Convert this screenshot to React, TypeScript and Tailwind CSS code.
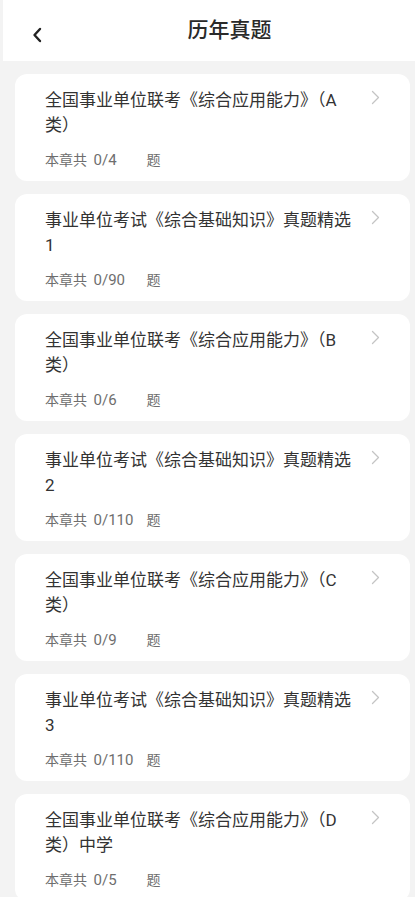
const items = [
  { title: '全国事业单位联考《综合应用能力》（A类）', done: 0, total: 4 },
  { title: '事业单位考试《综合基础知识》真题精选1', done: 0, total: 90 },
  { title: '全国事业单位联考《综合应用能力》（B类）', done: 0, total: 6 },
  { title: '事业单位考试《综合基础知识》真题精选2', done: 0, total: 110 },
  { title: '全国事业单位联考《综合应用能力》（C类）', done: 0, total: 9 },
  { title: '事业单位考试《综合基础知识》真题精选3', done: 0, total: 110 },
  { title: '全国事业单位联考《综合应用能力》（D类）中学', done: 0, total: 5 },
];

const App = () => {
  return (
    <div
      className="min-h-screen bg-[#f3f3f3] pl-[3px]"
      style={{ fontFamily: 'Roboto, "Noto Sans CJK SC", "Noto Sans", sans-serif' }}
    >
      {/* Header */}
      <div className="h-[61px] bg-white flex items-center relative">
        <button className="absolute left-[27px] top-[26px] w-[14px] h-[17px] flex items-center justify-center">
          <svg width="10" height="16" viewBox="0 0 10 16" fill="none">
            <path d="M8 2 L2.5 8 L8 14" stroke="#222" strokeWidth="2.4" strokeLinecap="round" strokeLinejoin="round" />
          </svg>
        </button>
        <h1 className="w-full pl-[41px] text-center text-[21px] font-medium text-[#2a2a2a] leading-none">
          历年真题
        </h1>
      </div>

      {/* List */}
      <div className="pt-[13px] flex flex-col gap-[13px]">
        {items.map((item, index) => (
          <div
            key={index}
            className="ml-[12px] mr-[5px] h-[107px] bg-white rounded-[12px] flex pl-[30px] pt-[14px]"
          >
            <div className="w-[308px] flex flex-col">
              <p className="text-[17px] leading-[25px] text-[#333] h-[50px]">{item.title}</p>
              <p className="mt-[12px] text-[14px] leading-[20px] text-[#6e6e6e]">
                本章共 <span className="inline-block w-[56px] text-[15px] pl-[3px]">{item.done}/{item.total}</span>题
              </p>
            </div>
            <div className="ml-[18px] pt-[2px]">
              <svg width="9" height="15" viewBox="0 0 9 15" fill="none">
                <path d="M1.5 1.5 L7.5 7.5 L1.5 13.5" stroke="#c4c4c4" strokeWidth="1.3" strokeLinecap="round" strokeLinejoin="round" />
              </svg>
            </div>
          </div>
        ))}
      </div>
    </div>
  );
};

export default App;
